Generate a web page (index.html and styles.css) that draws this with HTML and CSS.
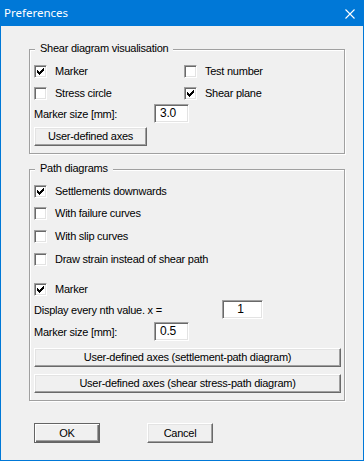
FILE: index.html
```html
<!DOCTYPE html>
<html>
<head>
<meta charset="utf-8">
<link rel="stylesheet" href="styles.css">
</head>
<body>
<div class="window">
  <div class="titlebar">
    <span class="title">Preferences</span>
    <svg class="close" width="10" height="10" viewBox="0 0 10 10"><path d="M0.5 0.5L9.5 9.5M9.5 0.5L0.5 9.5" stroke="#fff" stroke-width="1.1" fill="none"/></svg>
  </div>
  <div class="content">
    <div class="group group-shear">
      <span class="legend">Shear diagram visualisation</span>
      <div class="row">
        <label class="check col1"><span class="box checked"><svg width="9" height="9" viewBox="0 0 9 9"><path d="M1 3V6H2V7H3V8H4V7H5V6H6V5H7V4H8V1H7V2H6V3H5V4H4V5H3V4H2V3Z" fill="#000"/></svg></span>Marker</label>
        <label class="check"><span class="box"></span>Test number</label>
      </div>
      <div class="row mt9">
        <label class="check col1"><span class="box"></span>Stress circle</label>
        <label class="check"><span class="box checked"><svg width="9" height="9" viewBox="0 0 9 9"><path d="M1 3V6H2V7H3V8H4V7H5V6H6V5H7V4H8V1H7V2H6V3H5V4H4V5H3V4H2V3Z" fill="#000"/></svg></span>Shear plane</label>
      </div>
      <div class="field mt4">
        <span class="field-label w120">Marker size [mm]:</span>
        <span class="input w35">3.0</span>
      </div>
      <div class="btn btn-small mt4">User-defined axes</div>
    </div>

    <div class="group group-path">
      <span class="legend">Path diagrams</span>
      <div class="row">
        <label class="check"><span class="box checked"><svg width="9" height="9" viewBox="0 0 9 9"><path d="M1 3V6H2V7H3V8H4V7H5V6H6V5H7V4H8V1H7V2H6V3H5V4H4V5H3V4H2V3Z" fill="#000"/></svg></span>Settlements downwards</label>
      </div>
      <div class="row mt9">
        <label class="check"><span class="box"></span>With failure curves</label>
      </div>
      <div class="row mt10">
        <label class="check"><span class="box"></span>With slip curves</label>
      </div>
      <div class="row mt10">
        <label class="check"><span class="box"></span>Draw strain instead of shear path</label>
      </div>
      <div class="row mt17">
        <label class="check"><span class="box checked"><svg width="9" height="9" viewBox="0 0 9 9"><path d="M1 3V6H2V7H3V8H4V7H5V6H6V5H7V4H8V1H7V2H6V3H5V4H4V5H3V4H2V3Z" fill="#000"/></svg></span>Marker</label>
      </div>
      <div class="field mt4">
        <span class="field-label w188">Display every nth value. x =</span>
        <span class="input w41 center">1</span>
      </div>
      <div class="field mt3">
        <span class="field-label w120">Marker size [mm]:</span>
        <span class="input w35">0.5</span>
      </div>
      <div class="btn btn-wide mt7">User-defined axes (settlement-path diagram)</div>
      <div class="btn btn-wide mt7">User-defined axes (shear stress-path diagram)</div>
    </div>

    <div class="footer">
      <div class="btn btn-dialog btn-default">OK</div>
      <div class="btn btn-dialog">Cancel</div>
    </div>
  </div>
</div>
</body>
</html>
```
FILE: styles.css
```css
html, body {
  margin: 0;
  padding: 0;
  background: #f0f0f0;
}

.window {
  width: 364px;
  height: 461px;
  box-sizing: border-box;
  border: 1px solid #0078d7;
  border-top: none;
  background: #f0f0f0;
  font-family: "Liberation Sans", Arial, sans-serif;
  font-size: 11px;
  letter-spacing: -0.25px;
  color: #000;
}

.titlebar {
  height: 26px;
  background: #0078d7;
  display: flex;
  align-items: center;
  justify-content: space-between;
  padding: 0 9px 0 4px;
  margin: 0 -1px;
}

.title {
  font-family: "Noto Sans", "Liberation Sans", sans-serif;
  font-size: 11.5px;
  letter-spacing: 0;
  color: #fff;
  line-height: 14px;
  margin-top: -1px;
}

.close {
  display: block;
  margin-top: 1px;
}

.content {
  padding: 23px 18px 0 28px;
}

.group {
  position: relative;
  box-sizing: border-box;
  border: 1px solid #a0a0a0;
  box-shadow: inset 1px 1px 0 #fff, 1px 1px 0 #fff;
  padding: 15px 3px 7px 4px;
}

.group-path {
  margin-top: 15px;
}

.legend {
  position: absolute;
  top: -8px;
  left: 5px;
  padding: 0 5px;
  line-height: 13px;
  background: #f0f0f0;
}

.row {
  display: flex;
  align-items: center;
  height: 13px;
}

.check {
  display: flex;
  align-items: center;
  gap: 8px;
  line-height: 13px;
  white-space: nowrap;
}

.col1 {
  width: 150px;
}

.box {
  width: 13px;
  height: 13px;
  box-sizing: border-box;
  background: #fff;
  border: 1px solid;
  border-color: #a0a0a0 #fff #fff #a0a0a0;
  box-shadow: inset 1px 1px 0 #696969, inset -1px -1px 0 #e3e3e3;
  padding: 1px;
  flex: none;
}

.box svg {
  display: block;
}

.field {
  display: flex;
  align-items: center;
  height: 19px;
}

.field-label {
  white-space: nowrap;
}

.w120 { width: 120px; }
.w188 { width: 188px; }

.input {
  height: 19px;
  box-sizing: border-box;
  background: #fff;
  border: 1px solid;
  border-color: #a0a0a0 #fff #fff #a0a0a0;
  box-shadow: inset 1px 1px 0 #696969, inset -1px -1px 0 #e3e3e3;
  padding: 0 0 0 5px;
  line-height: 17px;
  font-size: 12px;
}

.w35 { width: 35px; }
.w41 { width: 41px; }

.center {
  text-align: center;
  padding: 0 4px 0 0;
}

.btn {
  box-sizing: border-box;
  height: 19px;
  background: #f0f0f0;
  border: 1px solid;
  border-color: #fff #696969 #696969 #fff;
  box-shadow: inset -1px -1px 0 #a0a0a0, inset 1px 1px 0 #e3e3e3;
  display: flex;
  align-items: center;
  justify-content: center;
  line-height: 13px;
  white-space: nowrap;
}

.btn-small { width: 113px; }
.btn-wide { width: 307px; }

.footer {
  display: flex;
  gap: 47px;
  margin-top: 22px;
  padding-left: 5px;
}

.btn-dialog {
  width: 66px;
  height: 20px;
}

.btn-default {
  border: 1px solid #646464;
  box-shadow: inset 1px 1px 0 #fff, inset -1px -1px 0 #696969, inset -2px -2px 0 #a0a0a0;
}

.mt3 { margin-top: 3px; }
.mt4 { margin-top: 4px; }
.mt7 { margin-top: 7px; }
.mt9 { margin-top: 9px; }
.mt10 { margin-top: 10px; }
.mt17 { margin-top: 17px; }
```
